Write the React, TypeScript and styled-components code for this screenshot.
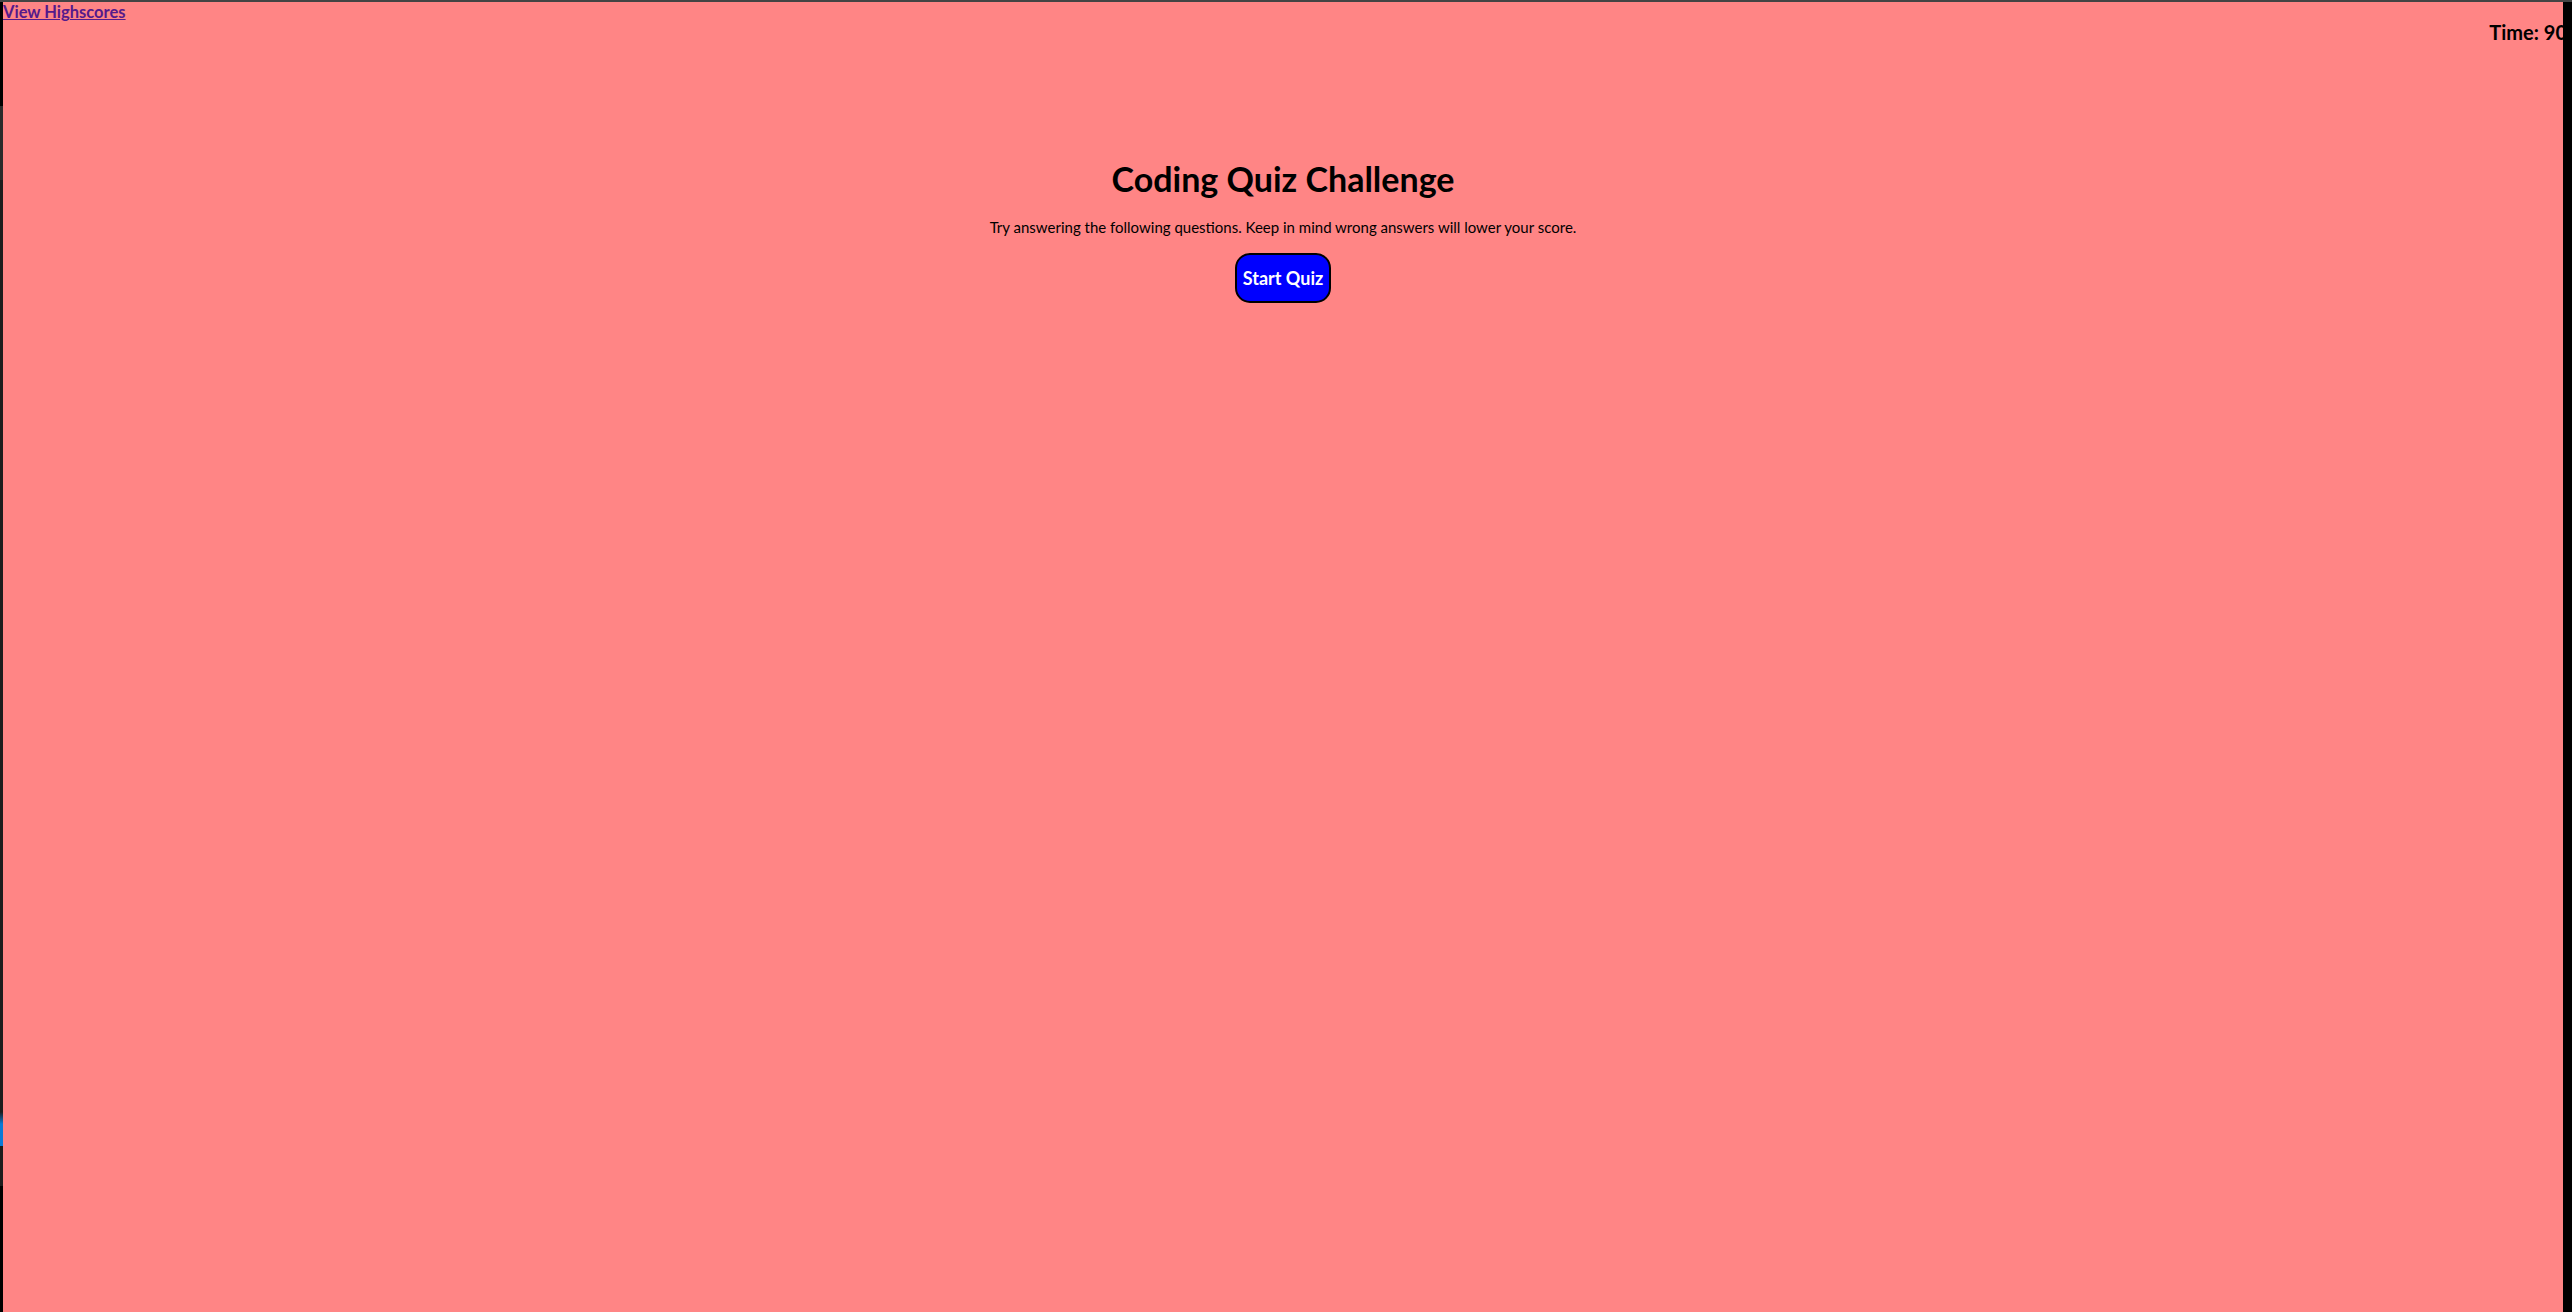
import React from "react";
import styled, { createGlobalStyle } from "styled-components";

const GlobalStyle = createGlobalStyle`
  html, body {
    margin: 0;
    padding: 0;
    height: 100%;
    background: #ff8585;
  }
  body {
    font-family: Lato, "Open Sans", sans-serif;
    color: #000;
  }
  #root {
    height: 100%;
  }
`;

const Frame = styled.div`
  display: flex;
  height: 100vh;
  background: #ff8585;
`;

const LeftEdge = styled.div`
  width: 3px;
  flex: none;
  background: linear-gradient(
    to bottom,
    #444 0px,
    #444 2px,
    #000 2px,
    #000 106px,
    #2a2a2a 106px,
    #2a2a2a 180px,
    #1c1c1c 180px,
    #1c1c1c 1112px,
    #0a7ad6 1124px,
    #0a7ad6 1146px,
    #1c1c1c 1146px,
    #1c1c1c 1186px,
    #000 1186px,
    #000 100%
  );
`;

const RightEdge = styled.div`
  width: 9px;
  flex: none;
  background: #000;
  border-top: 2px solid #444;
`;

const Page = styled.div`
  flex: 1;
  min-width: 0;
  border-top: 2px solid #444;
  overflow: hidden;
  display: flex;
  flex-direction: column;
`;

const Header = styled.header`
  display: flex;
  justify-content: space-between;
  align-items: flex-start;
`;

const HighscoreLink = styled.a`
  font-weight: 700;
  font-size: 16.5px;
  color: #551a8b;
  text-decoration: underline;
  line-height: 20px;
`;

const Timer = styled.div`
  font-weight: 700;
  font-size: 20px;
  line-height: 22px;
  margin-top: 19px;
  margin-right: -4px;
  white-space: nowrap;
`;

const Main = styled.main`
  text-align: center;
  padding-top: 115px;
`;

const Title = styled.h1`
  font-size: 34px;
  font-weight: 700;
  margin: 0;
`;

const Intro = styled.p`
  font-size: 15px;
  margin: 19px 0 17px;
`;

const StartButton = styled.button`
  font-family: Lato, "Open Sans", sans-serif;
  font-size: 18px;
  font-weight: 700;
  color: #fff;
  background: #0000ff;
  border: 2px solid #000;
  border-radius: 15px;
  height: 50px;
  padding: 0 6px;
  cursor: pointer;
`;

export default function App() {
  return (
    <>
      <GlobalStyle />
      <Frame>
        <LeftEdge />
        <Page>
          <Header>
            <HighscoreLink href="#highscores">View Highscores</HighscoreLink>
            <Timer>Time: 90</Timer>
          </Header>
          <Main>
            <Title>Coding Quiz Challenge</Title>
            <Intro>
              Try answering the following questions. Keep in mind wrong answers
              will lower your score.
            </Intro>
            <StartButton>Start Quiz</StartButton>
          </Main>
        </Page>
        <RightEdge />
      </Frame>
    </>
  );
}
